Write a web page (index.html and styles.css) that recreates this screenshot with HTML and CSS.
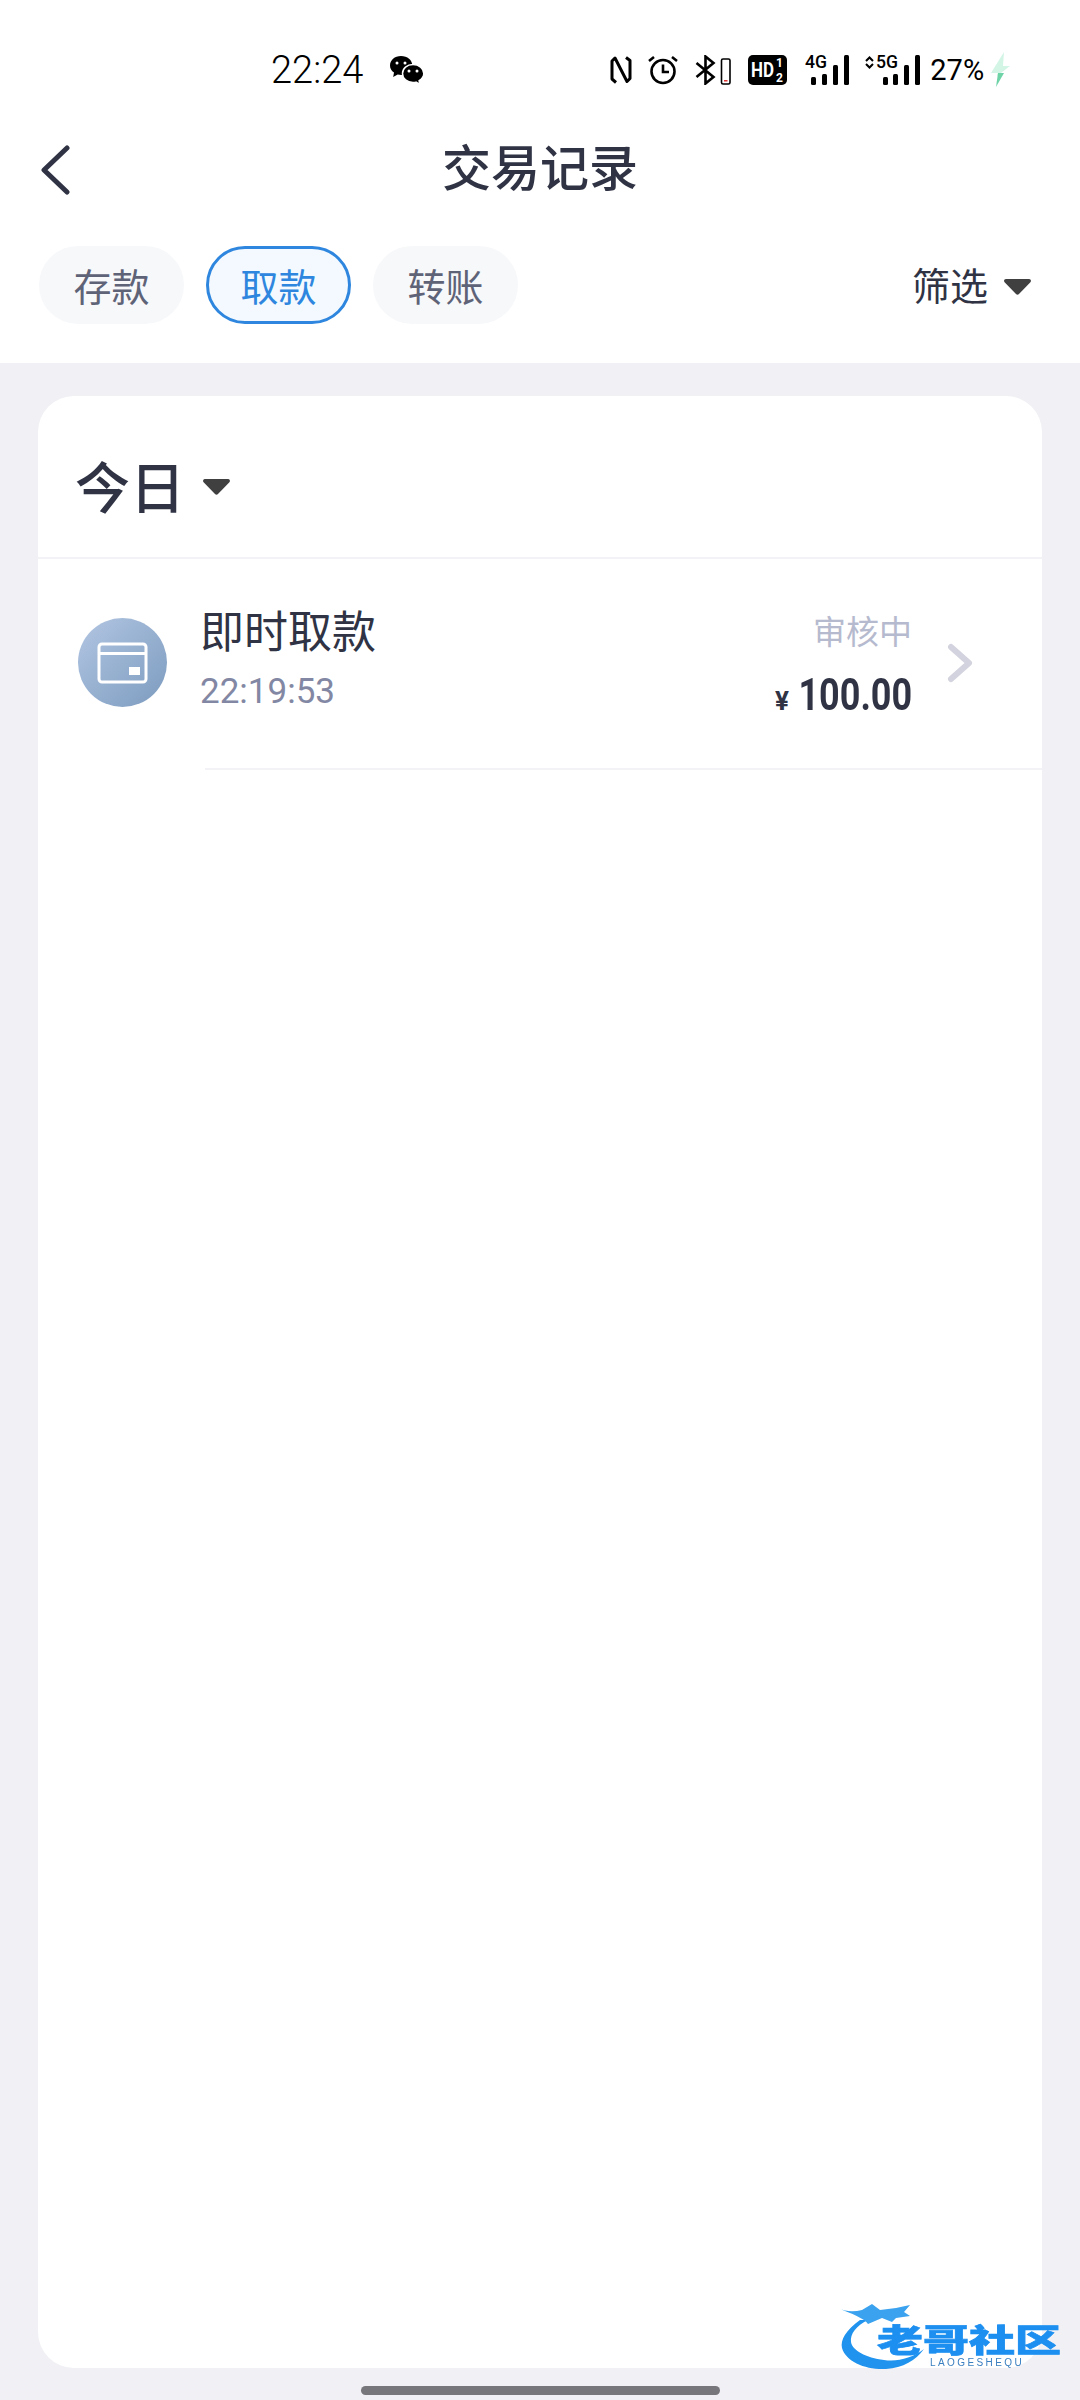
FILE: index.html
```html
<!DOCTYPE html>
<html lang="zh-CN">

<head>
    <meta charset="utf-8">
    <meta name="viewport" content="width=device-width, initial-scale=1.0">
    <title>交易记录</title>

    <link rel="stylesheet" href="styles.css">

</head>

<body>

    <header class="top">
        <div class="status">
            <span class="klokke">22:24</span>
            <svg class="wechat" width="36" height="30" viewBox="0 0 36 30">
                <path d="M12 1C5.600 1 1 5.200 1 10.400c0 3 1.500 5.500 4 7.200L4.200 22l4.500-2.500c1.200.3 2.400.5 3.600.5 6 0 11-4.200 11-9.600S18.400 1 12 1z" fill="#000" />
                <path d="M24 9.500c-6 0-10.500 4-10.500 9s4.500 9 10.500 9c1 0 2-.1 3-.4l3.800 2.200-.7-3.600c2.800-1.700 4.700-4.300 4.700-7.200 0-5-4.800-9-10.800-9z" fill="#000" stroke="#fff" stroke-width="1.500" />
                <circle cx="8" cy="8" r="1.500" fill="#fff" />
                <circle cx="16" cy="8" r="1.500" fill="#fff" />
                <circle cx="20" cy="16" r="1.500" fill="#fff" />
                <circle cx="28" cy="16" r="1.500" fill="#fff" />
            </svg>
            <div class="ikoner">
                <svg class="nfc" width="22" height="28" viewBox="0 0 22 28">
                    <path d="M6 26.500L2 23V5L5 2L17 25.500L20 22.500V4.500L16 1.500" fill="none" stroke="#000" stroke-width="3" stroke-linejoin="round" />
                </svg>
                <svg class="alarm" width="30" height="30" viewBox="0 0 30 30">
                    <circle cx="15" cy="16.500" r="11.500" fill="none" stroke="#000" stroke-width="2.600" />
                    <path d="M15 9.500v7.500h6" fill="none" stroke="#000" stroke-width="2.600" />
                    <path d="M1 6l5-4M29 6l-5-4" stroke="#000" stroke-width="2.600" />
                </svg>
                <svg class="bt" width="36" height="30" viewBox="0 0 36 30">
                    <path d="M1.500 8l17 14-8 6.500V1.500l8 6.500-17 14" fill="none" stroke="#000" stroke-width="2.600" />
                    <rect x="26.500" y="4" width="8.500" height="25" rx="1.500" fill="none" stroke="#000" stroke-width="1.600" />
                    <rect x="29" y="25" width="3.500" height="1.500" fill="#d33" />
                </svg>
                <svg class="hd" width="39" height="30" viewBox="0 0 39 30">
                    <rect width="39" height="30" rx="5" fill="#000" />
                    <text x="3" y="22" class="hd-tekst" textLength="23" lengthAdjust="spacingAndGlyphs">HD</text>
                    <text x="28" y="12" class="hd-lille">1</text>
                    <text x="28" y="27" class="hd-lille">2</text>
                </svg>
                <svg class="sim" width="45" height="38" viewBox="0 0 45 38">
                    <text x="0" y="20" class="sim-tekst" textLength="22" lengthAdjust="spacingAndGlyphs">4G</text>
                    <rect x="6" y="29" width="5" height="8" rx="1.500" />
                    <rect x="17" y="26" width="5" height="11" rx="1.500" />
                    <rect x="28" y="17" width="5" height="20" rx="1.500" />
                    <rect x="39" y="7" width="5" height="30" rx="1.500" />
                </svg>
                <svg class="sim sim2" width="56" height="38" viewBox="0 0 56 38">
                    <path d="M1 13l3.500-3.500L8 13M1 16l3.500 3.500L8 16" fill="none" stroke="#000" stroke-width="2" />
                    <text x="11" y="20" class="sim-tekst" textLength="22" lengthAdjust="spacingAndGlyphs">5G</text>
                    <rect x="18" y="29" width="5" height="8" rx="1.500" />
                    <rect x="28" y="26" width="5" height="11" rx="1.500" />
                    <rect x="39" y="17" width="5" height="20" rx="1.500" />
                    <rect x="50" y="7" width="5" height="30" rx="1.500" />
                </svg>
                <span class="procent">27%</span>
                <svg class="lyn" width="19" height="36" viewBox="0 0 19 36">
                    <path d="M13 0L0 21h7l-1 3 13-10h-7z" fill="#d3f5e6" />
                    <path d="M7 21h6L5 35z" fill="#6fd3a8" />
                </svg>
            </div>
        </div>

        <nav class="nav">
            <svg class="tilbage" width="30" height="50" viewBox="0 0 30 50">
                <path d="M27 3L4 25l23 22" fill="none" stroke="#2f3344" stroke-width="5" stroke-linecap="round" stroke-linejoin="round" />
            </svg>
            <h1>交易记录</h1>
        </nav>

        <div class="faner">
            <button class="fane">存款</button>
            <button class="fane valgt">取款</button>
            <button class="fane">转账</button>
            <div class="filter">
                <span>筛选</span>
                <svg width="29" height="18" viewBox="0 0 29 18">
                    <path d="M3 1h23c1.800 0 2.600 2 1.400 3.200L16 16c-.9.900-2.100.900-3 0L1.600 4.200C.4 3 1.200 1 3 1z" fill="#404040" />
                </svg>
            </div>
        </div>
    </header>

    <main class="kort">
        <div class="dato">
            <span>今日</span>
            <svg width="29" height="18" viewBox="0 0 29 18">
                <path d="M3 1h23c1.800 0 2.600 2 1.400 3.200L16 16c-.9.900-2.100.900-3 0L1.600 4.200C.4 3 1.200 1 3 1z" fill="#404040" />
            </svg>
        </div>

        <article class="raekke">
            <div class="cirkel">
                <svg width="89" height="89" viewBox="0 0 89 89">
                    <rect x="21" y="26" width="47" height="38" rx="3" fill="none" stroke="#fff" stroke-width="3" />
                    <rect x="21" y="34" width="47" height="3" fill="#fff" />
                    <rect x="51" y="49" width="11" height="8" fill="#fff" />
                </svg>
            </div>
            <div class="info">
                <h2>即时取款</h2>
                <p class="tid">22:19:53</p>
            </div>
            <div class="beloeb">
                <p class="tilstand">审核中</p>
                <p class="sum"><span class="valuta">¥</span><span class="tal">100.00</span></p>
            </div>
            <svg class="pil" width="26" height="40" viewBox="0 0 26 40">
                <path d="M4 4l18 16L4 36" fill="none" stroke="#d2d3de" stroke-width="6" stroke-linecap="round" stroke-linejoin="round" />
            </svg>
        </article>
    </main>

    <div class="hjem"></div>

    <div class="vandmaerke">
        <svg width="100" height="72" viewBox="0 0 100 72">
            <path d="M22 18C8 28 2 38 4 46c4 14 24 22 44 21 17-1 30-9 38-20-12 9-26 13-40 11C28 56 14 48 13 40c-1-8 5-16 17-22z" fill="#1f93ee" />
            <path d="M0 6c8 4 16 4 24 2l10-6 8 6 16-2 14-3-6 7 6 4-14 2-4 4-10-4-14 6C26 16 14 12 0 6z" fill="#3aa2ee" />
        </svg>
        <span class="vm-navn">老哥社区</span>
        <span class="vm-lille">LAOGESHEQU</span>
    </div>

</body>

</html>
```

FILE: styles.css
```css
* {
    box-sizing: border-box;
}

html,
body {
    margin: 0;
    padding: 0;
}

body {
    position: relative;
    width: 1080px;
    height: 2400px;
    overflow: hidden;
    background-color: #f0f0f5;
    color: #2f3344;
    font-family: Roboto, "Noto Sans CJK SC", sans-serif;
}

h1,
h2,
p {
    margin: 0;
    font-weight: 400;
}

.top {
    height: 363px;
    background-color: #fff;
}

/* statuslinje */
.status {
    display: flex;
    align-items: center;
    height: 88px;
    padding: 52px 0 0 271px;
    color: #000;
}

.klokke {
    font-size: 38px;
    font-weight: 300;
    line-height: 40px;
}

.wechat {
    margin-left: 26px;
}

.ikoner {
    display: flex;
    align-items: center;
    margin-left: 185px;
}

.alarm {
    margin-left: 16px;
}

.bt {
    margin-left: 17px;
}

.hd {
    margin-left: 17px;
}

.hd-tekst {
    font: 700 20px Roboto, sans-serif;
    fill: #fff;
}

.hd-lille {
    font: 700 12px Roboto, sans-serif;
    fill: #fff;
}

.sim {
    margin-left: 18px;
    margin-bottom: 6px;
}

.sim2 {
    margin-left: 15px;
}

.sim rect {
    fill: #000;
}

.sim-tekst {
    font: 500 18px Roboto, sans-serif;
}

.procent {
    margin-left: 9px;
    font-size: 29px;
    font-weight: 400;
    line-height: 32px;
}

.lyn {
    margin-left: 7px;
}

/* titel */
.nav {
    position: relative;
    height: 68px;
    margin-top: 48px;
    display: flex;
    align-items: center;
    justify-content: center;
}

.nav h1 {
    font-size: 49px;
    font-weight: 500;
    line-height: 68px;
}

.tilbage {
    position: absolute;
    left: 40px;
    top: 9px;
}

/* faner */
.faner {
    display: flex;
    align-items: center;
    gap: 22px;
    margin-top: 42px;
    padding: 0 38px 0 39px;
}

.fane {
    width: 145px;
    height: 78px;
    padding: 0;
    border: 3px solid #f7f8fa;
    border-radius: 39px;
    background-color: #f7f8fa;
    color: #5f6377;
    font-family: "Noto Sans CJK SC", sans-serif;
    font-size: 38px;
    line-height: 1;
}

.fane.valgt {
    border-color: #2e86de;
    background-color: #f3f9fe;
    color: #2e86de;
}

.filter {
    display: flex;
    align-items: center;
    gap: 15px;
    margin-left: auto;
    margin-right: 10px;
    padding-top: 4px;
    font-size: 38px;
    line-height: 50px;
}

/* kort */
.kort {
    height: 1972px;
    margin: 33px 38px 0;
    border-radius: 36px;
    background-color: #fff;
}

.dato {
    display: flex;
    align-items: center;
    gap: 17px;
    height: 163px;
    padding: 14px 0 0 37px;
    border-bottom: 2px solid #f3f3f7;
    font-size: 55px;
    font-weight: 500;
}

.dato svg {
    margin-top: 6px;
}

.raekke {
    display: flex;
    align-items: center;
    height: 211px;
    padding: 0 69px 4px 40px;
    background: linear-gradient(#f3f3f7, #f3f3f7) no-repeat 167px 100% / 100% 2px;
}

.cirkel {
    width: 89px;
    height: 89px;
    border-radius: 50%;
    background: linear-gradient(135deg, #b2c6e2, #7c9bbf);
}

.cirkel svg {
    display: block;
}

.info {
    margin-left: 33px;
    padding-bottom: 9px;
}

.info h2 {
    font-size: 44px;
    line-height: 60px;
}

.tid {
    margin-top: 7px;
    color: #8287a3;
    font-size: 35px;
    line-height: 44px;
}

.beloeb {
    margin-left: auto;
    padding-top: 11px;
    text-align: right;
}

.tilstand {
    color: #b6bace;
    font-size: 33px;
    line-height: 46px;
}

.sum {
    margin-top: 14px;
    font-size: 45px;
    font-weight: 700;
    line-height: 50px;
}

.valuta {
    display: inline-block;
    margin-right: -19px;
    font-size: 26px;
}

/* smal talskrift findes ikke, saa tallene presses sammen */
.tal {
    display: inline-block;
    transform: scaleX(.8);
    transform-origin: 100% 50%;
}

.pil {
    margin-left: 35px;
}

.hjem {
    width: 359px;
    height: 9px;
    margin: 18px 0 0 361px;
    border-radius: 5px;
    background-color: #77777b;
}

/* vandmaerke over kortets hjoerne */
.vandmaerke {
    position: absolute;
    left: 838px;
    top: 2302px;
    width: 226px;
    height: 74px;
    filter: blur(.7px);
}

.vandmaerke svg {
    display: block;
}

.vm-navn {
    position: absolute;
    left: 39px;
    top: 19px;
    width: 186px;
    height: 34px;
    font-family: "Noto Sans CJK SC", sans-serif;
    font-size: 46px;
    font-weight: 900;
    line-height: 34px;
    white-space: nowrap;
    color: #1c8ff0;
    -webkit-text-stroke: 1px #1c8ff0;
    transform: scaleY(.68);
    transform-origin: 0 50%;
}

.vm-lille {
    position: absolute;
    left: 92px;
    top: 55px;
    color: #3a7fc0;
    font-family: "Liberation Sans", sans-serif;
    font-size: 10px;
    letter-spacing: 2.400px;
    line-height: 12px;
}
```
